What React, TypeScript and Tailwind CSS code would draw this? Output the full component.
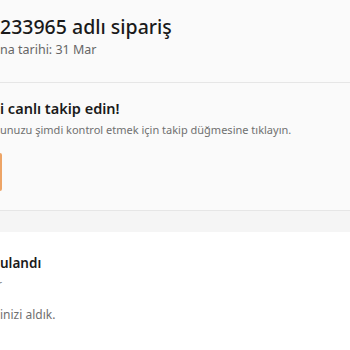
export default function App() {
  return (
    <div className="w-[350px] h-[350px] overflow-hidden bg-white font-['Noto_Sans',sans-serif] text-[#1a1a1a]">
      {/* order header */}
      <header className="h-[83px] bg-[#fafafa] border-b border-[#e6e6e6] pt-[13px] whitespace-nowrap">
        <h1 className="text-[19.5px] leading-[28px] font-medium">233965 adlı sipariş</h1>
        <p className="text-[12.5px] leading-[18px] text-[#666666]">na tarihi: 31 Mar</p>
      </header>

      {/* live tracking card */}
      <section className="h-[128px] bg-[#fafafa] border-b border-[#e6e6e6] pt-[14px] whitespace-nowrap">
        <h2 className="text-[14.5px] leading-[22px] font-semibold">i canlı takip edin!</h2>
        <p className="mt-[2px] text-[11px] leading-[18px] text-[#707070]">
          unuzu şimdi kontrol etmek için takip düğmesine tıklayın.
        </p>
        <button className="mt-[14px] block h-[38px] w-[2px] rounded-r-[2px] bg-[#eda466]" />
      </section>

      <div className="h-[21px] bg-[#f5f5f5]" />

      {/* status */}
      <section className="pt-[20px] whitespace-nowrap">
        <h2 className="text-[13.5px] leading-[22px] font-semibold">ulandı</h2>
        <p className="mt-[2px] -ml-[3px] text-[12px] leading-[18px] text-[#8a8a8a]">r</p>
        <p className="mt-[11px] text-[12px] leading-[20px] text-[#707070]">inizi aldık.</p>
      </section>
    </div>
  );
}
